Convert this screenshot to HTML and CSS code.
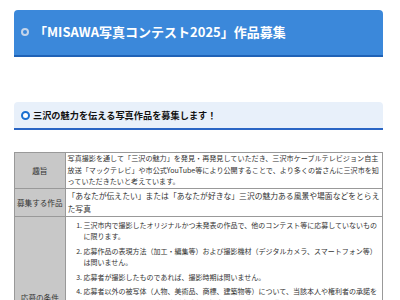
FILE: index.html
```html
<!DOCTYPE html>
<html>
  <head>
    <meta charset="utf-8">
    <link rel="stylesheet" href="styles.css">
  </head>
  <body>
    <div class="page">
      <h1 class="title"><span class="dot"></span>「MISAWA写真コンテスト2025」作品募集</h1>

      <h2 class="subtitle"><span class="ring"></span>三沢の魅力を伝える写真作品を募集します！</h2>

      <table class="info">
        <tr>
          <th>趣旨</th>
          <td class="small">写真撮影を通して「三沢の魅力」を発見・再発見していただき、三沢市ケーブルテレビジョン自主放送「マックテレビ」や市公式YouTube等により公開することで、より多くの皆さんに三沢市を知っていただきたいと考えています。</td>
        </tr>
        <tr>
          <th>募集する作品</th>
          <td class="large">「あなたが伝えたい」または「あなたが好きな」三沢の魅力ある風景や場面などをとらえた写真</td>
        </tr>
        <tr>
          <th class="tall">応募の条件</th>
          <td>
            <ol class="rules">
              <li>三沢市内で撮影したオリジナルかつ未発表の作品で、他のコンテスト等に応募していないものに限ります。</li>
              <li>応募作品の表現方法（加工・編集等）および撮影機材（デジタルカメラ、スマートフォン等）は問いません。</li>
              <li>応募者が撮影したものであれば、撮影時期は問いません。</li>
              <li>応募者以外の被写体（人物、美術品、商標、建築物等）について、当該本人や権利者の承諾を得てください。また、被写体が未成年の場合は、保護者の承諾を得てください。</li>
            </ol>
          </td>
        </tr>
      </table>
    </div>
  </body>
</html>
```

FILE: styles.css
```css
* {
  box-sizing: border-box;
}
body {
  margin: 0;
  background: #fff;
  color: #222;
  font-family: "Noto Sans CJK JP", "Noto Sans", sans-serif;
}
.page {
  padding: 10px 17px 20px 14px;
}
/* Blue page title */
.title {
  display: flex;
  align-items: center;
  gap: 5px;
  height: 47px;
  margin: 0;
  padding: 0 0 2px 7px;
  background: #3b88da;
  border-bottom: 2px solid #1f62b6;
  border-radius: 4px 4px 0 0;
  color: #fff;
  font-size: 13px;
  font-weight: bold;
}
.dot {
  width: 8px;
  height: 8px;
  border: 2px solid #c3d4ea;
  border-radius: 50%;
  flex: none;
}
/* Light section heading */
.subtitle {
  display: flex;
  align-items: center;
  gap: 3px;
  height: 28px;
  margin: 45px 0 0 0;
  padding: 0 0 0 7px;
  background: #e8f0fa;
  border-bottom: 2px solid #2a65c4;
  border-radius: 4px 4px 0 0;
  color: #111;
  font-size: 9.2px;
  font-weight: bold;
}
.ring {
  width: 9px;
  height: 9px;
  border: 2px solid #1a6fd0;
  border-radius: 50%;
  background: #fff;
  flex: none;
}
/* Outline table */
.info {
  width: 100%;
  margin-top: 22px;
  border-collapse: collapse;
  border: 1px solid #999;
}
.info th,
.info td {
  border: 1px solid #999;
  vertical-align: middle;
}
.info th {
  width: 50px;
  padding: 0 2px;
  background: #c8c8c8;
  color: #333;
  font-size: 7.6px;
  font-weight: normal;
  text-align: center;
  white-space: nowrap;
}
.info th.tall {
  vertical-align: bottom;
  padding-bottom: 9px;
}
.info td {
  padding: 0 2px;
  color: #333;
}
.small {
  font-size: 7.1px;
  line-height: 11.6px;
}
.large {
  font-size: 7.8px;
  line-height: 13.5px;
}
.rules {
  margin: 3px 0 0 0;
  padding-left: 16px;
  font-size: 7px;
  line-height: 11.2px;
}
.rules li {
  margin-bottom: 3.5px;
}
```
